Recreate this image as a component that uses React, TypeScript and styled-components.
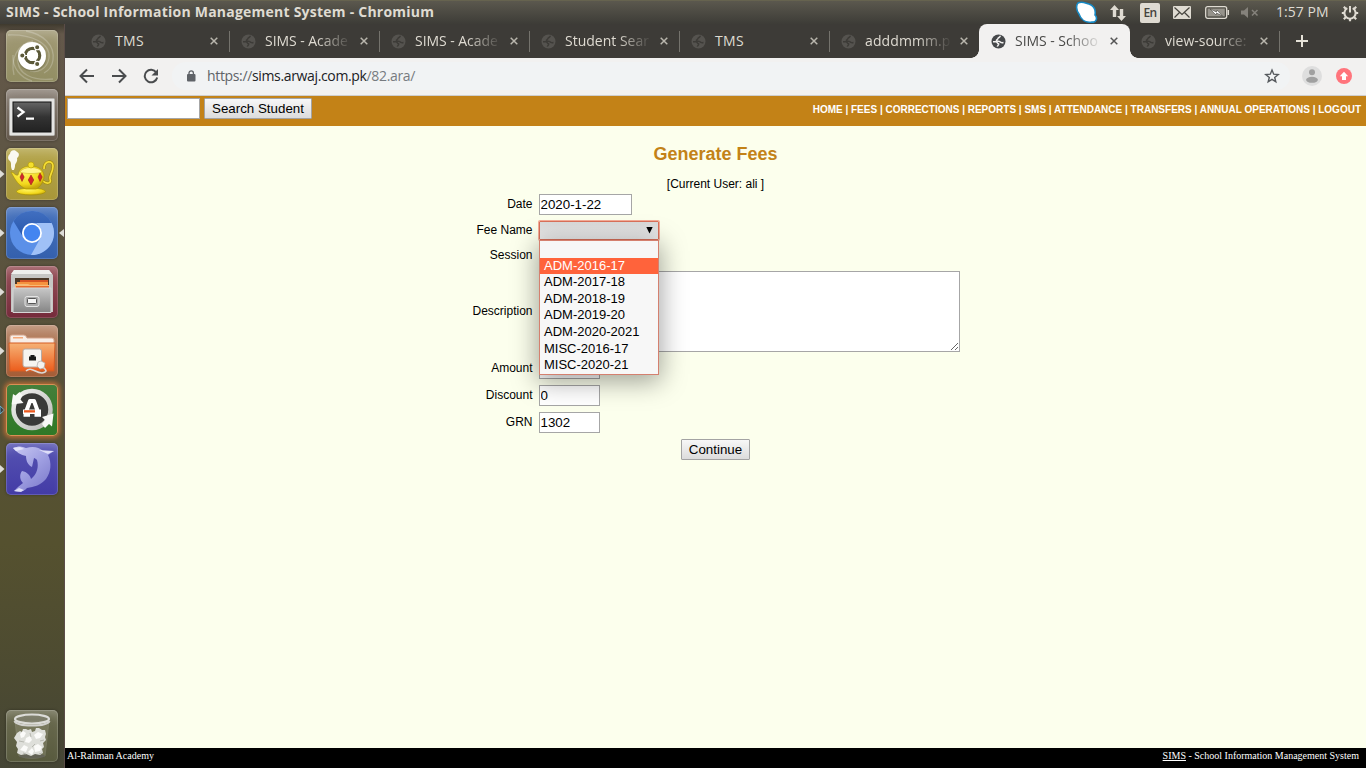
import React from 'react';
import styled, { createGlobalStyle, css } from 'styled-components';

const Global = createGlobalStyle`
  * { box-sizing: border-box; }
  html, body { margin: 0; padding: 0; overflow: hidden; }
  svg { display: block; flex: none; }
`;

const ui = '"Open Sans", "Noto Sans", sans-serif';
const arial = '"Liberation Sans", Arial, sans-serif';

const Desktop = styled.div`
  width: 1366px; height: 768px; display: flex; flex-direction: column;
  overflow: hidden; font-family: ${ui};
`;
const Panel = styled.header`
  height: 24px; flex: none; display: flex; align-items: center; justify-content: space-between;
  padding: 0 7px 0 6px; color: #dfdbd2; border-top: 1px solid #66634f;
  background: linear-gradient(#5b584e, #3d3c37);
`;
const WindowTitle = styled.span`
  font-size: 14px; font-weight: 700; line-height: 22px; white-space: nowrap; letter-spacing: 0.23px; margin-top: -2px;
`;
const Indicators = styled.div`display: flex; align-items: center; height: 23px;`;
const Clock = styled.span`
  font-size: 14px; line-height: 22px; width: 54px; margin: -2px 11px 0 17px; white-space: nowrap; letter-spacing: 0.05px;
`;
const Language = styled.span`
  width: 20px; height: 20px; margin: 0 13px 0 13px; border-radius: 2px; background: #dfdbd2; color: #45433d;
  font-size: 12px; font-weight: 600; line-height: 20px; text-align: center; letter-spacing: -0.6px;
`;
const Workspace = styled.div`flex: 1; display: flex; min-height: 0;`;

const Launcher = styled.nav`
  width: 65px; flex: none; display: flex; flex-direction: column; gap: 7px; padding: 6px 0 6px 0;
  border-right: 1px solid #5b4d48;
  background: linear-gradient(#3f3a2e 0, #64584a 10px, #5f5645 120px, #575139 330px, #55512f 520px, #4d4b31 640px, #454535);
`;
const LauncherRow = styled.div`display: grid; grid-template-columns: 6px 52px 6px; align-items: center; height: 52px;`;
const Tile = styled.div<{ $bg: string; $glow?: boolean }>`
  width: 52px; height: 52px; border-radius: 5px; background: ${p => p.$bg};
  box-shadow: ${p => p.$glow
    ? 'inset 0 0 0 1px #d98f55, 0 0 4px 2px #b56b36'
    : 'inset 0 0 0 1px rgba(255,255,255,.16), inset 0 10px 12px -7px rgba(255,255,255,.28), 0 0 3px rgba(0,0,0,.35)'};
`;
const Spacer = styled.div`flex: 1;`;

const Browser = styled.section`flex: 1; min-width: 0; display: flex; flex-direction: column;`;
const TabStrip = styled.div`
  height: 34px; flex: none; display: flex; align-items: stretch; background: #3d3b37; padding-left: 15px;
`;
const Tab = styled.div<{ $active?: boolean }>`
  position: relative; width: 150px; flex: none; display: flex; align-items: center; padding: 0 10px 0 11px;
  color: #dfdbd2;
  ${p => p.$active && css`
    color: #4a4a48; background: #f2f1f0; border-radius: 8px 8px 0 0; margin-left: -1px; padding: 0 10px 0 12px;
    width: 151px;
    &::before, &::after { content: ''; position: absolute; bottom: 0; width: 8px; height: 8px; }
    &::before { left: -8px; background: radial-gradient(circle at 0 0, transparent 7.5px, #f2f1f0 8px); }
    &::after { right: -8px; background: radial-gradient(circle at 100% 0, transparent 7.5px, #f2f1f0 8px); }
  `}
`;
const TabTitle = styled.span<{ $spacing: number; $fade: boolean }>`
  width: 88px; margin-left: 9px; font-size: 14px; line-height: 20px; white-space: nowrap;
  letter-spacing: ${p => p.$spacing}px;
  ${p => p.$fade && css`mask-image: linear-gradient(90deg, #000 52px, transparent 87px);`}
`;
const CloseSlot = styled.span`margin-left: auto; margin-right: 2px;`;
const Divider = styled.i`width: 1px; height: 21px; align-self: center; background: #74726c; margin-left: -1px; flex: none;`;
const NewTab = styled.span`display: flex; align-items: center; margin-left: 16px;`;

const Toolbar = styled.div`
  height: 38px; flex: none; display: flex; align-items: center; background: #f2f1f0; border-bottom: 1px solid #cfcecd;
  padding: 0 14px 1px 14px;
`;
const NavButtons = styled.div`display: flex; gap: 16px; width: 93px;`;
const Omnibox = styled.div`
  flex: 1; height: 28px; border-radius: 14px; background: #f1f3f4; display: flex; align-items: center;
  padding: 0 10px 0 14px;
`;
const Url = styled.span`
  font-size: 14px; line-height: 20px; margin-left: 11px; color: #202124; white-space: nowrap; letter-spacing: -0.35px;
`;
const Dim = styled.span<{ $c: string }>`color: ${p => p.$c};`;
const Extras = styled.div`display: flex; align-items: center; gap: 14px; margin-left: 12px;`;

const Page = styled.main`
  flex: 1; display: flex; flex-direction: column; background: #fcffed; font-family: ${arial}; color: #000; min-height: 0;
`;
const SiteBar = styled.div`
  height: 30px; flex: none; display: flex; align-items: flex-start; justify-content: space-between;
  background: #c38217; padding: 2px 5px 0 2px;
`;
const SearchForm = styled.div`display: flex; gap: 4px;`;
const Field = styled.input<{ $w: number }>`
  width: ${p => p.$w}px; height: 21px; border: 1px solid #a6a6a6; border-radius: 0; padding: 1px 0.5px; margin: 0;
  background: #fff; color: #000; font: 13.333px ${arial}; outline: none;
`;
const PushButton = styled.button<{ $w: number }>`
  width: ${p => p.$w}px; height: 21px; border: 1px solid #a3a3a3; border-radius: 1px; padding: 0; margin: 0;
  background: linear-gradient(#f7f7f7, #dcdcdc); color: #000; font: 13.333px/18px ${arial}; white-space: nowrap;
`;
const SiteNav = styled.div`color: #fff; font-size: 10px; font-weight: 700; line-height: 12px; padding-top: 6px; white-space: nowrap;`;
const Heading = styled.h1`
  margin: 17px 0 0; text-align: center; color: #c38217; font-size: 18px; line-height: 22px; font-weight: 700;
`;
const CurrentUser = styled.p`margin: 12px 0 0; text-align: center; font-size: 12px; line-height: 14px;`;
const FormGrid = styled.div`
  width: 489px; margin: 0 auto; display: grid; grid-template-columns: 61.5px 421px; column-gap: 6.5px;
  grid-template-rows: 27px 25px 25px 87px 27px 27px 27px; align-items: center;
`;
const Label = styled.label`font-size: 12px; line-height: 14px; text-align: right; white-space: nowrap; padding-bottom: 2px;`;
const Cell = styled.div`display: flex; align-items: center;`;
const TextBox = styled.textarea`
  width: 421px; height: 81px; display: block; margin: 0; padding: 2px; border: 1px solid #a6a6a6; outline: none; background: #fff;
`;
const SelectWrap = styled.div`position: relative; width: 120px; height: 19px;`;
const SelectBox = styled.div`
  height: 19px; border: 1px solid #d9705a; border-radius: 1px; box-shadow: 0 0 0 1px #f5ad98;
  background: linear-gradient(#dadada, #ededed); display: flex; align-items: center; justify-content: flex-end; padding: 0 5px 1px 0;
`;
const Options = styled.ul`
  position: absolute; z-index: 2; top: 19px; left: 0; width: 120px; height: 135px; margin: 0; padding: 0; list-style: none;
  border: 1px solid #d4806f; background: #f7f7f7; box-shadow: 0 5px 24px 2px rgba(0,0,0,.36);
`;
const Option = styled.li<{ $on?: boolean }>`
  height: 16.6px; padding-left: 4px; font-size: 13px; line-height: 16.6px; white-space: nowrap;
  color: ${p => (p.$on ? '#fff' : '#000')}; background: ${p => (p.$on ? '#ff633b' : 'transparent')};
`;
const Submit = styled.div`display: flex; justify-content: center; padding-top: 3px; flex: 1;`;
const Footer = styled.footer`
  height: 20px; flex: none; display: flex; justify-content: space-between; background: #000; color: #fff;
  padding: 2px 7px 0 2px; font: 10px/12px "Liberation Serif", "Times New Roman", serif;
`;

const Globe = ({ color, hole }: { color: string; hole: string }) => (
  <svg width="15" height="15" viewBox="0 0 15 15">
    <circle cx="7.5" cy="7.5" r="7" fill={color} />
    <path d="M9.300 1.800C9.200 3.600 7.200 3.300 6.900 4.600c-.2 1.200-1.600.8-1.500 2 .2 1.200 2.600.3 3.400 1 .6.900 2.300 1.200 3.700.9M2 7.800h3c1.500 0 1.200 1.900 2.600 1.900.6 1.200-1 1.400-1.300 3"
      fill="none" stroke={hole} strokeWidth="1.500" />
  </svg>
);
const Cross = ({ color }: { color: string }) => (
  <svg width="8" height="8" viewBox="0 0 8 8"><path d="M.7.7l6.6 6.6M7.3.7.7 7.3" stroke={color} strokeWidth="1.500" /></svg>
);

const Bfb = () => (
  <svg width="52" height="52" viewBox="0 0 52 52">
    <g fill="none" stroke="#fff" strokeOpacity=".22" strokeWidth="1.3">
      <path d="M2 5C25 4 45 13 43 28 41 40 31 43 24 41" /><path d="M20 1c17 3 29 14 27 29-1 7-5 11-9 13" />
      <path d="M8 45C4 28 12 14 27 11" /><path d="M47 49C28 51 10 45 12 27c1-8 6-12 10-14" /><path d="M26 51C15 48 6 38 7 25" />
    </g>
    <circle cx="26" cy="27" r="14.5" fill="#6c6a4c" opacity=".45" /><circle cx="26" cy="26" r="14" fill="#fff" />
    <circle cx="26.500" cy="25.500" r="7.200" fill="none" stroke="#5b5939" strokeWidth="3.200" />
    <path d="m26.500 25.500 6 10M26.500 25.500H14M26.500 25.500l6-10" stroke="#fff" strokeWidth="1.200" />
    {[[16.3, 25.5], [31.2, 17.2], [31.2, 34]].map(([x, y]) => (
      <circle key={y} cx={x} cy={y} r="2.600" fill="#5b5939" stroke="#fff" strokeWidth="1.100" />
    ))}
    <circle cx="26.500" cy="25.500" r="5.600" fill="#fff" />
  </svg>
);
const Terminal = () => (
  <svg width="52" height="52" viewBox="0 0 52 52">
    <defs><linearGradient id="term" x2="0" y2="1"><stop stopColor="#666" /><stop offset=".5" stopColor="#333" /><stop offset="1" stopColor="#222" /></linearGradient></defs>
    <rect x="3.5" y="9.500" width="45" height="37" rx="1" fill="#e4e4e2" stroke="#b5b3ae" />
    <rect x="7" y="13" width="38" height="30" fill="url(#term)" stroke="#111" />
    <path d="m11.500 18.500 6 4.600-6 4.600M20 29.700h8" fill="none" stroke="#fff" strokeWidth="2.300" />
  </svg>
);
const Teapot = () => (
  <svg width="52" height="52" viewBox="0 0 52 52">
    <defs><radialGradient id="pot" cx=".4" cy=".3" r=".7"><stop stopColor="#fff35e" /><stop offset=".7" stopColor="#f2d81c" /><stop offset="1" stopColor="#c9a90c" /></radialGradient></defs>
    <path d="M6 22C4 18 6 16 4 13 1 11 2 7 4 6c0-4 5-5 7-2 3 1 2 5 0 6 1 4-2 5-2 8 0 2-1 3-1 4z" fill="#fff" opacity=".92" />
    <path d="M38 21c0-9 9-9 9-3 0 7-4 9-3 13 2 5-4 5-7 2" fill="none" stroke="#a08a0a" strokeWidth="3" />
    <path d="M38 21c0-9 9-9 9-3 0 7-4 9-3 13 2 5-4 5-7 2" fill="none" stroke="#f5dd35" strokeWidth="1.700" />
    <ellipse cx="25" cy="43.500" rx="14.500" ry="3.500" fill="url(#pot)" stroke="#a38d00" strokeWidth=".6" />
    <path d="M5 24c3 0 4 4 7 3 1-6 6-9 13-9s13 4 13 10-4 11-8 13H20C13 38 9 32 5 24z" fill="url(#pot)" stroke="#a99100" strokeWidth=".6" />
    <path d="M14 24c3-6 19-6 22 0-5 2-17 2-22 0z" fill="#fff58c" stroke="#c6ac16" strokeWidth=".5" />
    <circle cx="25" cy="17" r="3" fill="#f4df2c" stroke="#b69c00" strokeWidth=".6" />
    <path d="m16 25 2.200 4-2.200 4.500-2-4.500zM25 27l2.800 5-2.800 5-2.800-5zM34 25l2.200 4-2.200 4.500-2-4.500z" fill="#d5262b" stroke="#8e2015" strokeWidth=".5" />
  </svg>
);
const Chromium = () => (
  <svg width="52" height="52" viewBox="0 0 52 52">
    <defs><linearGradient id="crTop" x2="0" y2="1"><stop stopColor="#416fc0" /><stop offset="1" stopColor="#2857ad" /></linearGradient></defs>
    <circle cx="26" cy="26" r="22" fill="#5b90e8" />
    <path d="M7.500 14.200A22 22 0 0 1 45.600 16H26a10 10 0 0 0-9.500 13z" fill="url(#crTop)" />
    <path d="M45.600 16A22 22 0 0 1 25 48l9.500-17c2.500-5 1-11-4.500-15z" fill="#a0c1f7" />
    <circle cx="26" cy="26" r="10" fill="#fff" /><circle cx="26" cy="26" r="8.200" fill="#4485f0" />
  </svg>
);
const Files = () => (
  <svg width="52" height="52" viewBox="0 0 52 52">
    <defs><linearGradient id="cab" x2="0" y2="1"><stop stopColor="#c7c7c7" /><stop offset="1" stopColor="#858585" /></linearGradient></defs>
    <path d="M8 4h35l4 5v37H5V9z" fill="#c6c6c4" /><path d="M8 4h35l3 4H5z" fill="#efefed" />
    <path d="M9 12h34v12H9z" fill="#4b3828" /><path d="M14 14h28v3H14z" fill="#d65324" /><path d="M11 16h31v3H11z" fill="#f5923e" />
    <path d="M9 18h13l2 1h19v5H9z" fill="#f8ba74" /><path d="M10 20h33v3H10z" fill="#e86a2b" />
    <path d="M7 22h38v24.500H7z" fill="url(#cab)" stroke="#d6d6d6" /><rect x="19" y="30.500" width="14" height="10" rx="2" fill="#aaa" stroke="#e4e4e4" />
    <rect x="21.500" y="32.500" width="9" height="5" rx="1" fill="#f5f5f5" stroke="#555" />
  </svg>
);
const NetFolder = () => (
  <svg width="52" height="52" viewBox="0 0 52 52">
    <defs><linearGradient id="fold" x2="0" y2="1"><stop stopColor="#f6b276" /><stop offset="1" stopColor="#ec5d1c" /></linearGradient></defs>
    <path d="M4 12q0-2 2-2h12q2 0 3 3h25q2 0 2 2v8H4z" fill="#f8eee7" stroke="#d4a48c" /><path d="M7 12h10v1.500H7z" fill="#f4a878" />
    <path d="M3 18h46l-1 28H4z" fill="url(#fold)" stroke="#d55c23" />
    <rect x="17" y="24" width="18.500" height="18" rx="2" fill="#f6f4f0" stroke="#b6aaa3" />
    <path d="M23 35.500v-4h1.500v-1.500h4V31.500H30v4z" fill="#1a1a18" />
    <path d="M20 46c5-5 9 2 16 2 7-1 3-4 1-6" fill="none" stroke="#dcd9d5" strokeWidth="1.600" />
    <path d="m31 41 1-4 3-1 4 2-1 5-4 1z" fill="#f4f2ef" stroke="#aaa" strokeWidth=".7" />
  </svg>
);
const Updater = () => (
  <svg width="52" height="52" viewBox="0 0 52 52">
    <defs><linearGradient id="ring" x2="1" y2="1"><stop stopColor="#f2f2f0" /><stop offset="1" stopColor="#b9b9b5" /></linearGradient></defs>
    <circle cx="26" cy="25.500" r="17" fill="#3a3a38" /><circle cx="26" cy="25.500" r="18.500" fill="none" stroke="url(#ring)" strokeWidth="4.500" />
    <path d="m5.500 20.500 12-1.500-3-3.500 2-4-3-3.500-4 3.500-2.500-1.500z" fill="#f8f8f6" /><path d="m36 33 11.500-3.500-1.500 13-3-2.500-4 4-3-4 3-4z" fill="#f8f8f6" />
    <path d="M20 28 24 17h4l4 11" fill="none" stroke="#fff" strokeWidth="4" strokeLinejoin="round" />
    <path d="M17 25.500h18V30H17zM17.500 30h6.500v2.800h-6.500zM28.500 30H35v2.800h-6.500z" fill="#fff" /><path d="M18 26.200h11v2.300H18z" fill="#ec5a20" />
  </svg>
);
const Dolphin = () => (
  <svg width="52" height="52" viewBox="0 0 52 52">
    <defs><linearGradient id="dol" x2=".8" y2="1"><stop stopColor="#c9c9f2" /><stop offset=".5" stopColor="#a0a0e2" /><stop offset="1" stopColor="#7c7acb" /></linearGradient></defs>
    <path d="M7 5c5-2 9-2 13 0 7-2 13-1 17 3l11 0-6 4c4 8 3 17-2 24-5 6-12 8-19 9-2 3-8 5-13 3l4-4 5-4c-3-3-4-8-1-12 5 1 8 4 9 8 6-5 8-12 6-19-1-1-2-2-3-2l-2 9c-4-2-6-6-6-11C15 12 10 9 7 5z" fill="url(#dol)" />
    <path d="m7 5 7-1 4 2-8 2zM33 7l15 1-6 3zM8 48l5-3 5 2-3 2z" fill="#e8e8fb" opacity=".85" />
  </svg>
);
const Trash = () => (
  <svg width="52" height="52" viewBox="0 0 52 52">
    <path d="m9 11 4 35q13 5 26 0l4-35z" fill="#aaa98f" opacity=".28" stroke="#d0d0c4" strokeWidth=".7" />
    <ellipse cx="26" cy="46" rx="13" ry="2.500" fill="#555" opacity=".5" />
    <path d="m11 23 3-2 2 1 1-3 3 0 2 1 3-1 1 3 3-1 1-3 3 0 3 2 3 0 1 4-1 3 1 3-3 3 1 4-2 2 1 4-3 2-5-1-4 2-5-2-5 1-4-2 1-4-2-3 1-4-3-4z" fill="#dedfda" />
    <path d="m14 24 3-3 3 2-2 4-3 1zM28 25l4-3 5 2-3 4-4 1zM20 28l4-2 2 4-3 3-4-1zM14 40l4-5 4 2-2 5zM28 36l4-2 4 3-2 4-5 1zM22 42l4-4 2 3-2 4z" fill="#fbfbf9" />
    <path d="m13 31 5 1M24 23l1 4M34 31l4-1M26 37l3-3M20 44l-3-1M33 44l3-1" stroke="#b7b8b0" fill="none" />
    <ellipse cx="26" cy="9" rx="17" ry="4.500" fill="#8b8b80" fillOpacity=".5" stroke="#dcdcd8" strokeWidth="2.200" />
    <path d="M8.500 11c3 6 32 6 35 0" fill="none" stroke="#d2d2ce" strokeWidth="2.200" />
  </svg>
);

const apps: { bg: string; icon: React.ReactNode; run?: boolean; here?: boolean; glow?: boolean }[] = [
  { bg: 'linear-gradient(#a19975, #928e63)', icon: <Bfb /> },
  { bg: 'linear-gradient(#8c8278, #62574a)', icon: <Terminal /> },
  { bg: 'linear-gradient(#b5a64d, #a89638)', icon: <Teapot />, run: true },
  { bg: 'linear-gradient(#4672bd, #3460ad)', icon: <Chromium />, run: true, here: true },
  { bg: 'linear-gradient(#985159, #742a3a)', icon: <Files />, run: true },
  { bg: 'linear-gradient(#b7886b, #a55c35)', icon: <NetFolder />, run: true },
  { bg: 'linear-gradient(#447f3b, #2f7826)', icon: <Updater />, run: true, glow: true },
  { bg: 'linear-gradient(#5654b2, #433ba6)', icon: <Dolphin />, run: true },
];
const Pip = ({ on, flip, hollow }: { on?: boolean; flip?: boolean; hollow?: boolean }) => (
  <svg width="6" height="10" viewBox="0 0 6 10">
    {on && <path d={flip ? 'M6 1v8L1 5z' : 'M0 1v8l4.500-4z'} fill={hollow ? '#263b42' : '#deddd8'} stroke={hollow ? '#62b6dc' : 'none'} />}
  </svg>
);

const tabs = [
  { t: 'TMS', s: 0.3 }, { t: 'SIMS - Acade', s: -0.05, f: true }, { t: 'SIMS - Acade', s: -0.05, f: true },
  { t: 'Student Sear', s: 0, f: true }, { t: 'TMS', s: 0.3 }, { t: 'adddmmm.p', s: 0.1, f: true },
  { t: 'SIMS - Schoo', s: -0.05, f: true, a: true }, { t: 'view-source:', s: 0, f: true },
];
const fees = ['', 'ADM-2016-17', 'ADM-2017-18', 'ADM-2018-19', 'ADM-2019-20', 'ADM-2020-2021', 'MISC-2016-17', 'MISC-2020-21'];

const Icon = styled.svg<{ $gap?: number }>`margin-left: ${p => p.$gap ?? 0}px;`;

const StatusIcons = () => (
  <>
    <Icon width="24" height="23" viewBox="0 0 24 23">
      <path d="M4 2c4-2 7 0 11 1 5 2 7 6 6 11 3 3 1 8-3 7-6 1-11-2-13-8-3-4-3-9-1-11z" fill="#fff" stroke="#1689c4" strokeWidth="1.600" />
    </Icon>
    <Icon $gap={11} width="18" height="18" viewBox="0 0 18 18">
      <path d="M5.500 1 10 6H7.200v7H3.800V6H1zM12.500 17 8 12h2.800V5h3.400v7H17z" fill="#dfdbd2" />
    </Icon>
    <Language>En</Language>
    <Icon width="18" height="13" viewBox="0 0 18 13">
      <rect width="18" height="13" rx="1" fill="#dfdbd2" /><path d="m1.500 1.500 7.500 7 7.500-7M1.500 11.500 6.500 6.500M16.500 11.500l-5-5" fill="none" stroke="#45433d" strokeWidth="1.200" />
    </Icon>
    <Icon $gap={14} width="25" height="13" viewBox="0 0 25 13">
      <rect x=".7" y=".7" width="21" height="11.600" rx="2" fill="none" stroke="#dfdbd2" strokeWidth="1.300" />
      <rect x="2.600" y="2.600" width="17.200" height="7.800" fill="#96938b" /><path d="M23.300 4v5" stroke="#dfdbd2" strokeWidth="1.500" />
      <path d="m5 3 6.500 3 .5-2 5.500 6-6-3-.5 2z" fill="#fff" stroke="#45433d" strokeWidth=".6" />
    </Icon>
    <Icon $gap={11} width="18" height="13" viewBox="0 0 18 13">
      <path d="M0 4.500h3L7 1v11L3 8.500H0z" fill="#85827b" /><path d="m11 4 5.500 5.500m0-5.500L11 9.500" stroke="#85827b" strokeWidth="1.500" />
    </Icon>
  </>
);
const Gear = () => (
  <svg width="18" height="18" viewBox="0 0 18 18" fill="none" stroke="#dfdbd2">
    <path d="M6.300 4.200a5.600 5.600 0 1 0 5.400 0" strokeWidth="2" /><path d="M9 2v6.500" strokeWidth="2" />
    <path d="M.8 9H4M14 9h3.200M9 14v3.200M2.800 2.800l2.200 2.200M15.200 2.800 13 5M2.800 15.200 5 13M15.200 15.200 13 13" strokeWidth="2.200" />
  </svg>
);

export default function App() {
  return (
    <Desktop>
      <Global />
      <Panel>
        <WindowTitle>SIMS - School Information Management System - Chromium</WindowTitle>
        <Indicators><StatusIcons /><Clock>1:57 PM</Clock><Gear /></Indicators>
      </Panel>
      <Workspace>
        <Launcher>
          {apps.map((a, i) => (
            <LauncherRow key={i}>
              <Pip on={a.run} hollow={a.glow} /><Tile $bg={a.bg} $glow={a.glow}>{a.icon}</Tile><Pip on={a.here} flip />
            </LauncherRow>
          ))}
          <Spacer />
          <LauncherRow><Pip /><Tile $bg="linear-gradient(#6b6b50, #585a3e)"><Trash /></Tile><Pip /></LauncherRow>
        </Launcher>
        <Browser>
          <TabStrip>
            {tabs.map((t, i) => (
              <React.Fragment key={i}>
                <Tab $active={t.a}>
                  <Globe color={t.a ? '#46484a' : '#55534f'} hole={t.a ? '#f2f1f0' : '#3d3b37'} />
                  <TabTitle $spacing={t.s} $fade={!!t.f}>{t.t}</TabTitle>
                  <CloseSlot><Cross color={t.a ? '#555' : '#b9b6ad'} /></CloseSlot>
                </Tab>
                {(i < 5 || i === 7) && <Divider />}
              </React.Fragment>
            ))}
            <NewTab><svg width="12" height="12" viewBox="0 0 12 12"><path d="M6 0v12M0 6h12" stroke="#e6e2d8" strokeWidth="2" /></svg></NewTab>
          </TabStrip>
          <Toolbar>
            <NavButtons>
              {['M15 8H2M8 1.500 1.500 8 8 14.500', 'M1 8h13M8 1.500 14.500 8 8 14.500'].map(d => (
                <svg key={d} width="16" height="16" viewBox="0 0 16 16"><path d={d} fill="none" stroke="#4a4c4e" strokeWidth="2" /></svg>
              ))}
              <svg width="16" height="16" viewBox="0 0 16 16"><path d="M13.300 4.500A6.300 6.300 0 1 0 14.200 9.500" fill="none" stroke="#4a4c4e" strokeWidth="2" /><path d="M15 1v6.500H8.500z" fill="#4a4c4e" /></svg>
            </NavButtons>
            <Omnibox>
              <svg width="10" height="12" viewBox="0 0 10 12"><rect x="1" y="4" width="8.500" height="7.500" rx="1" fill="#5f6368" /><path d="M3 4.500V3a2.200 2.200 0 0 1 4.400 0v1.500" fill="none" stroke="#5f6368" strokeWidth="1.300" /></svg>
              <Url><Dim $c="#5f6368">https://</Dim>sims.arwaj.com.pk<Dim $c="#777b80">/82.ara/</Dim></Url>
              <Spacer />
              <svg width="16" height="16" viewBox="0 0 16 16"><path d="m8 2 1.700 4.200 4.500.3-3.500 2.900 1.100 4.400L8 11.400l-3.800 2.400 1.100-4.400-3.500-2.900 4.500-.3z" fill="none" stroke="#55595d" strokeWidth="1.400" /></svg>
            </Omnibox>
            <Extras>
              <svg width="20" height="20" viewBox="0 0 20 20"><circle cx="10" cy="10" r="10" fill="#dedede" /><circle cx="10" cy="6.200" r="3" fill="#a0a0a0" /><ellipse cx="10" cy="13.800" rx="5.900" ry="3" fill="#a0a0a0" /></svg>
              <svg width="16" height="16" viewBox="0 0 16 16"><circle cx="8" cy="8" r="8" fill="#ff747c" /><path d="m8 3.800 4.200 4.400H10V12H6V8.200H3.800z" fill="#fff" /></svg>
            </Extras>
          </Toolbar>
          <Page>
            <SiteBar>
              <SearchForm><Field $w={133} /><PushButton $w={108}>Search Student</PushButton></SearchForm>
              <SiteNav>HOME | FEES | CORRECTIONS | REPORTS | SMS | ATTENDANCE | TRANSFERS | ANNUAL OPERATIONS | LOGOUT</SiteNav>
            </SiteBar>
            <Heading>Generate Fees</Heading>
            <CurrentUser>[Current User: ali ]</CurrentUser>
            <FormGrid>
              <Label>Date</Label><Cell><Field $w={93} defaultValue="2020-1-22" /></Cell>
              <Label>Fee Name</Label>
              <Cell>
                <SelectWrap>
                  <SelectBox><svg width="7" height="7" viewBox="0 0 7 7"><path d="M.3 0h6.400L3.500 6.500z" fill="#000" /></svg></SelectBox>
                  <Options>{fees.map((f, i) => <Option key={i} $on={i === 1}>{f}</Option>)}</Options>
                </SelectWrap>
              </Cell>
              <Label>Session</Label><Cell />
              <Label>Description</Label><Cell><TextBox /></Cell>
              <Label>Amount</Label><Cell><Field $w={61} /></Cell>
              <Label>Discount</Label><Cell><Field $w={61} defaultValue="0" /></Cell>
              <Label>GRN</Label><Cell><Field $w={61} defaultValue="1302" /></Cell>
            </FormGrid>
            <Submit><PushButton $w={69}>Continue</PushButton></Submit>
            <Footer><span>Al-Rahman Academy</span><span><u>SIMS</u> - School Information Management System</span></Footer>
          </Page>
        </Browser>
      </Workspace>
    </Desktop>
  );
}
